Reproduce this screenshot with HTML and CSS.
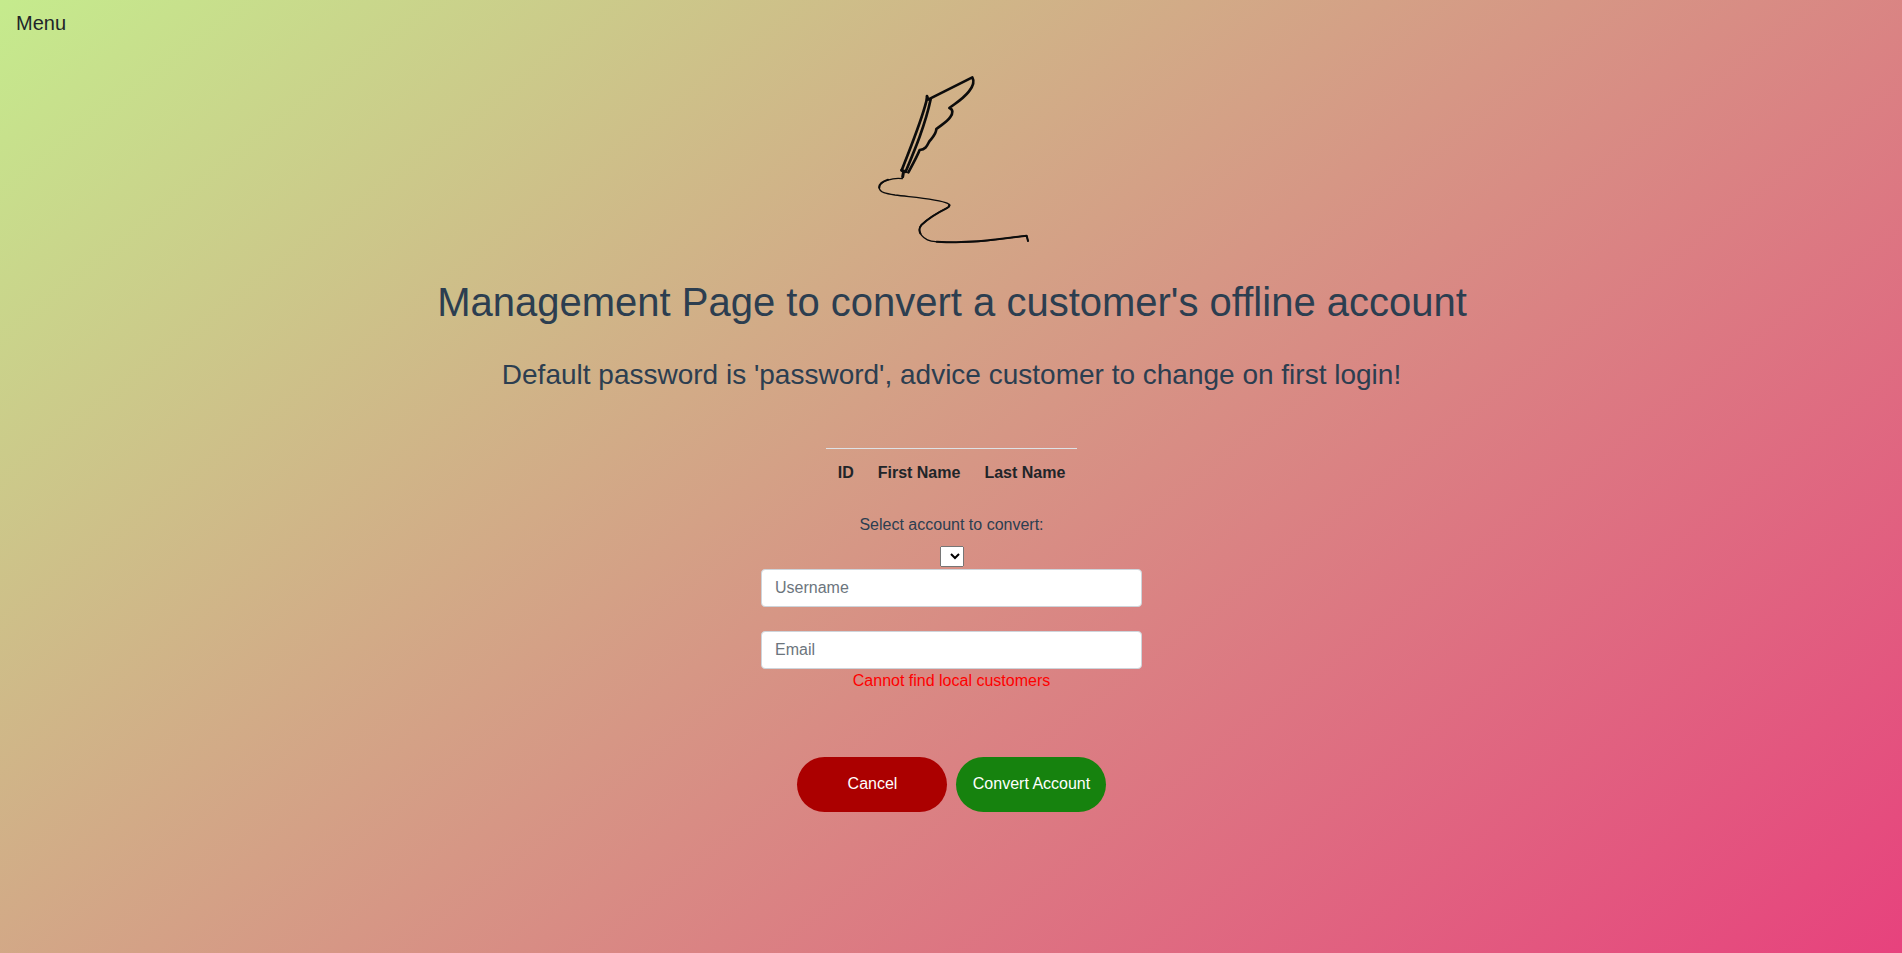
FILE: index.html
```
<!DOCTYPE html>
<html lang="en">
<head>
<meta charset="utf-8">
<title>Convert account</title>
<link rel="stylesheet" href="styles.css">
</head>
<body>
<nav class="navbar"><a class="navbar-brand">Menu</a></nav>
<main class="page">
  <svg class="logo" viewBox="0 0 570 600" width="190" height="200" fill="none" stroke="#0c0c0c" stroke-linecap="round" stroke-linejoin="round">
    <path stroke-width="8" d="M201 108L204 119L337 52C344 64 341 76 327 94C308 118 286 130 268 144C280 148 279 160 271 171C260 187 243 195 229 207C229 222 217 233 208 244C202 255 199 268 179 270C170 292 157 315 145 337"/>
    <path stroke-width="8" d="M201 110L199 124C182 190 151 263 125 331M212 118C196 194 165 268 137 335"/>
    <path stroke-width="9" d="M125 331L137 335M131 333L128 350"/>
    <path stroke-width="4" d="M127 356C100 352 61 363 57 382C59 398 78 401 105 405C161 412 236 417 263 430Q276 437 263 443C228 460 200 479 184 495C168 513 188 543 227 545C290 549 364 546 413 538L500 527L504 543"/>
    <path stroke-width="6" d="M84 359C68 364 57 373 58 383M268 434Q268 441 258 446C228 461 202 479 185 494C176 505 178 514 181 520M230 545C290 549 364 545 413 538L500 527L504 543"/>
  </svg>
  <h1 class="title">Management Page to convert a customer's offline account</h1>
  <h2 class="subtitle">Default password is 'password', advice customer to change on first login!</h2>
  <table class="table">
    <thead><tr><th>ID</th><th>First Name</th><th>Last Name</th></tr></thead>
  </table>
  <form class="form">
    <label class="label">Select account to convert:</label>
    <select class="select"></select>
    <input class="field" type="text" placeholder="Username">
    <input class="field field-email" type="text" placeholder="Email">
    <span class="error">Cannot find local customers</span>
    <div class="actions">
      <button class="btn btn-cancel" type="button">Cancel</button>
      <button class="btn btn-convert" type="button">Convert Account</button>
    </div>
  </form>
</main>
</body>
</html>
```
FILE: styles.css
```
* { box-sizing: border-box; }
html { height: 100%; }
body {
  margin: 0;
  height: 100%;
  overflow: hidden;
  font: 400 16px/1.5 "Liberation Sans", Arial, sans-serif;
  color: #2c3e50;
  background: linear-gradient(142.5deg, #c5eb8d, #e7427d) no-repeat;
}
.navbar { height: 60px; padding: 8px 16px; }
.navbar-brand { font-size: 20px; line-height: 30px; color: #212529; }
.page { display: flex; flex-direction: column; align-items: center; padding-left: 1px; }
.logo { display: block; margin-left: 7px; }
.title { margin: 18px 0 0 1px; font-size: 40px; line-height: 48px; font-weight: 500; }
.subtitle { margin: 32px 0 0; font-size: 28px; line-height: 34px; font-weight: 500; }
.table { margin: 56px 0 0; border-collapse: collapse; color: #212529; }
.table th { padding: 12px; border-top: 1px solid #dee2e6; font-weight: 700; }
.form { display: flex; flex-direction: column; align-items: center; width: 381px; margin-top: 16px; }
.label { margin: 0 0 8px; }
.select { height: 21px; width: 24px; margin: 1px 0 2px 1px; font: 16px "Liberation Sans", Arial, sans-serif; }
.field {
  width: 100%;
  height: 38px;
  padding: 6px 12px 6px 13px;
  border: 1px solid #ced4da;
  border-radius: 4px;
  background: #fff;
  font: 16px/24px "Liberation Sans", Arial, sans-serif;
  color: #495057;
}
.field::placeholder { color: #6c757d; opacity: 1; }
.field-email { margin-top: 24px; }
.error { color: #f00; }
.actions { display: flex; gap: 9px; margin-top: 64px; }
.btn {
  width: 150px;
  height: 55px;
  padding: 0 0 2px 1px;
  border: 0;
  border-radius: 28px;
  color: #fff;
  font: 16px "Liberation Sans", Arial, sans-serif;
}
.btn-cancel { background: #ab0000; }
.btn-convert { background: #16820e; }
```
